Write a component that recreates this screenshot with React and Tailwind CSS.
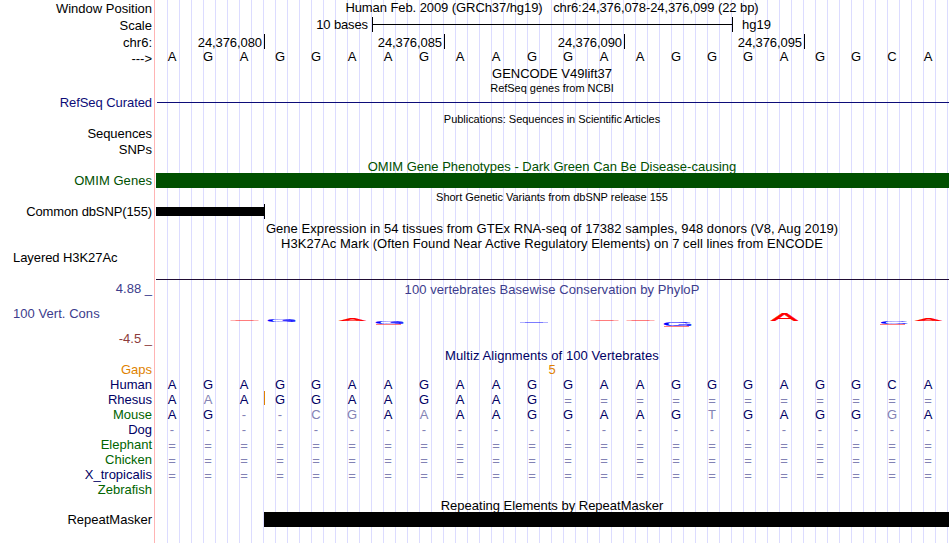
import React from "react";
import clsx from "clsx";

/* ─── Data ───────────────────────────────────────────────────── */

const LABELS = [
  { text: "Window Position", className: "mt-px" },
  { text: "Scale", className: "mt-0.5" },
  { text: "chr6:", className: "mt-0.5" },
  { text: "--->", className: "mt-px" },
  { text: "RefSeq Curated", className: "mt-[29px] tracking-[-0.07px] text-[#0c0c78]" },
  { text: "Sequences", className: "mt-4 tracking-[-0.05px]" },
  { text: "SNPs", className: "mt-px" },
  { text: "OMIM Genes", className: "mt-4 tracking-[0.05px] text-[#005000]" },
  { text: "Common dbSNP(155)", className: "mt-4 tracking-[-0.12px]" },
  { text: "Layered H3K27Ac", className: "mt-[31px] tracking-[-0.07px]", left: true },
  { text: "4.88 _", className: "mt-4 text-[#3c3c8c]" },
  { text: "100 Vert. Cons", className: "mt-2.5 tracking-[0.05px] text-[#3c3c8c]", left: true },
  { text: "-4.5 _", className: "mt-2.5 text-[#8c3c3c]" },
  { text: "Gaps", className: "mt-4 text-[#e08200]" },
  { text: "Human", className: "text-[#000064]" },
  { text: "Rhesus", className: "text-[#000064]" },
  { text: "Mouse", className: "text-[#006400]" },
  { text: "Dog", className: "text-[#000064]" },
  { text: "Elephant", className: "text-[#006400]" },
  { text: "Chicken", className: "text-[#006400]" },
  { text: "X_tropicalis", className: "text-[#000064]" },
  { text: "Zebrafish", className: "text-[#006400]" },
  { text: "RepeatMasker", className: "mt-[15px]" },
];

const SEQUENCE = "AGAGGAAGAAGGAAGGGAGGCA";

// lower case marks a base that differs from human
const ALIGNMENTS = [
  { species: "Human", bases: SEQUENCE },
  { species: "Rhesus", bases: "AaAGGAAGAAG===========", insertAt: 3 },
  { species: "Mouse", bases: "AG--cgAaAAGGAAGtGAGGgA" },
  { species: "Dog", bases: "----------------------" },
  { species: "Elephant", bases: "======================" },
  { species: "Chicken", bases: "======================" },
  { species: "X_tropicalis", bases: "======================" },
];

const POSITIONS = ["24,376,085", "24,376,090", "24,376,095"];

// entries without a height are near zero and show as a flat dash
const CONSERVATION = [
  { col: 2, base: "A", top: 23 },
  { col: 3, base: "G", top: 23, height: 2 },
  { col: 5, base: "A", top: 21, height: 3 },
  { col: 6, base: "G", top: 25, height: 2, under: 27 },
  { col: 10, base: "G", top: 25 },
  { col: 12, base: "A", top: 23 },
  { col: 13, base: "A", top: 23 },
  { col: 14, base: "G", top: 25.2, height: 3.3, under: 29 },
  { col: 17, base: "A", top: 17, height: 7 },
  { col: 20, base: "C", top: 25, height: 2, under: 27 },
  { col: 21, base: "A", top: 21, height: 3 },
];

/* ─── Components ─────────────────────────────────────────────── */

function Title({ small, className, children }) {
  return (
    <div className={clsx("h-[15px] pr-px text-center leading-[15px] whitespace-pre", small && "text-[11px] tracking-[-0.03px]", className)}>
      {children}
    </div>
  );
}

function BaseRow({ bases, insertAt, className }) {
  return (
    <div className={clsx("flex h-[15px]", className)}>
      {bases.split("").map((b, i) => (
        <span
          key={i}
          className={clsx(
            "relative w-9 shrink-0 pr-0.5 text-center",
            b === "=" && "pt-px",
            /[a-z=-]/.test(b) && "text-[#8282b4]"
          )}
        >
          {insertAt === i && <i className="absolute -top-px left-px h-3.5 w-px bg-[#e08200]" />}
          {b.toUpperCase()}
        </span>
      ))}
    </div>
  );
}

function ConservationLogo() {
  return (
    <svg className="block h-[51px] w-[794px]" viewBox="0 0 794 51" fontSize="10">
      {CONSERVATION.map(({ col, base, top, height, under }) => {
        const cx = col * 36 + (base === "A" ? 17.5 : 19);
        const color = base === "A" ? "#ff0000" : "#0000ff";
        return (
          <g key={col}>
            {under && <path d={`M${cx - 14} ${under + 0.5}h25`} stroke="#ff0000" strokeOpacity="0.5" />}
            {height ? (
              <text
                textAnchor="middle"
                fill={color}
                stroke={color}
                strokeWidth="0.2"
                transform={`translate(${cx} ${top + height}) scale(4.1 ${height / 6.88})`}
              >
                {base}
              </text>
            ) : (
              <>
                <path d={`M${cx - 14} ${top + 0.5}h28`} stroke={color} strokeOpacity="0.3" />
                <path d={`M${cx - 9} ${top + 0.5}h18`} stroke={color} strokeOpacity="0.3" />
              </>
            )}
          </g>
        );
      })}
    </svg>
  );
}

/* ─── Genome Browser ─────────────────────────────────────────── */

export default function App() {
  return (
    <div className="flex h-[543px] w-[950px] overflow-hidden bg-white font-['Liberation_Sans',Arial,sans-serif] text-[13px] leading-[15px] text-black">
      {/* Track labels */}
      <div className="flex w-[155px] shrink-0 flex-col border-r border-[#ffb4b4] pr-0.5 whitespace-nowrap">
        {LABELS.map(({ text, className, left }) => (
          <div key={text} className={clsx("h-[15px] shrink-0", left ? "pl-[13px]" : "text-right", className)}>
            {text}
          </div>
        ))}
      </div>

      {/* Tracks */}
      <div className="w-[795px] shrink-0 bg-[repeating-linear-gradient(to_right,transparent_0,transparent_11px,#dcdcff_11px,#dcdcff_12px)] bg-[position:1px_0]">
        <Title className="tracking-[-0.08px]">Human Feb. 2009 (GRCh37/hg19)   chr6:24,376,078-24,376,099 (22 bp)</Title>

        <div className="mt-0.5 flex h-[15px]">
          <span className="w-[217px] pr-1 text-right tracking-[-0.12px]">10 bases</span>
          <div className="flex w-[361px] items-center border-x border-black">
            <div className="h-px w-full bg-black" />
          </div>
          <span className="pl-[9px]">hg19</span>
        </div>

        <div className="mt-0.5 flex h-[15px] text-right tracking-[-0.08px]">
          <span className="w-[110px] border-r border-black pt-px pr-0.5">24,376,080</span>
          {POSITIONS.map((p) => (
            <span key={p} className="w-[180px] border-r border-black pt-px pr-0.5">{p}</span>
          ))}
        </div>
        <BaseRow bases={SEQUENCE} />

        <Title className="mt-0.5">GENCODE V49lift37</Title>
        <Title small>RefSeq genes from NCBI</Title>
        <div className="mt-1.5 mr-px ml-0.5 h-px bg-[#0c0c78]" />
        <Title small className="mt-[9px]">Publications: Sequences in Scientific Articles</Title>

        <Title className="mt-8 text-[#005000]">OMIM Gene Phenotypes - Dark Green Can Be Disease-causing</Title>
        <div className="-mt-px mr-px ml-px h-[15px] bg-[#005000]" />

        <Title small className="mt-0.5">Short Genetic Variants from dbSNP release 155</Title>
        <div className="-mt-px ml-px flex h-[15px] w-[109px] items-center border-r border-black">
          <div className="h-[9px] w-full bg-black" />
        </div>

        <Title className="mt-0.5 tracking-[0.055px]">Gene Expression in 54 tissues from GTEx RNA-seq of 17382 samples, 948 donors (V8, Aug 2019)</Title>
        <Title className="tracking-[0.05px]">H3K27Ac Mark (Often Found Near Active Regulatory Elements) on 7 cell lines from ENCODE</Title>
        <div className="mt-7 mr-px ml-px h-px bg-[#200c34]" />

        <Title className="mt-0.5 tracking-[0.06px] text-[#3c3c8c]">100 vertebrates Basewise Conservation by PhyloP</Title>
        <ConservationLogo />

        <Title className="tracking-[0.08px] text-[#000064]">Multiz Alignments of 100 Vertebrates</Title>
        <Title className="-mt-px pr-0.5 text-[#e08200]">5</Title>
        {ALIGNMENTS.map((a) => (
          <BaseRow key={a.species} bases={a.bases} insertAt={a.insertAt} className="text-[#000064]" />
        ))}

        <Title className="mt-4">Repeating Elements by RepeatMasker</Title>
        <div className="-mt-px mr-px ml-[109px] h-[15px] bg-black" />
      </div>
    </div>
  );
}
